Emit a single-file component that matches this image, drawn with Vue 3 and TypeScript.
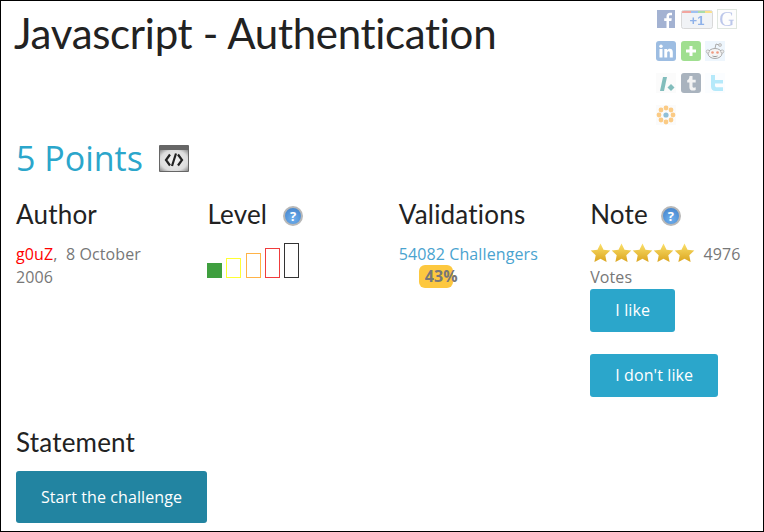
<script setup lang="ts">
const bars = [
  { h: 15, color: "#3f9f3f", fill: true },
  { h: 20, color: "#ffff33", fill: false },
  { h: 25, color: "#ffb347", fill: false },
  { h: 30, color: "#f03c3c", fill: false },
  { h: 35, color: "#333333", fill: false },
];
const stars = [1, 2, 3, 4, 5];
</script>

<template>
  <div class="page">
    <header class="top">
      <h1>Javascript - Authentication</h1>
      <div class="social">
        <div class="soc-row">
          <svg class="fb" width="18" height="18" viewBox="0 0 18 18"><rect width="18" height="18" fill="#a3b2d2" /><path d="M12 18v-7h2.400l.4-2.800H12V6.600c0-.8.3-1.300 1.400-1.300H15V2.800c-.5 0-1.200-.1-2-.1-2 0-3.500 1.200-3.500 3.500v2H7.200V11h2.300v7z" fill="#fff" /></svg>
          <svg class="plus-one" width="32" height="19" viewBox="0 0 32 19"><rect x=".5" y=".5" width="31" height="18" rx="2" fill="#f1f3f6" stroke="#d9d9d9" /><path d="M1 3V2a1 1 0 0 1 1-1h8v2z" fill="#f2a6a0" /><path d="M10 1h7v2h-7z" fill="#9fc0f2" /><path d="M17 1h7v2h-7z" fill="#a9dca9" /><path d="M24 1h6a1 1 0 0 1 1 1v1h-7z" fill="#fbe08c" /><text x="16" y="15" text-anchor="middle" class="plus-text">+1</text></svg>
          <svg class="g-icon" width="20" height="20" viewBox="0 0 20 20"><rect x=".5" y=".5" width="19" height="19" fill="#fdfdfd" stroke="#dfe6df" /><text x="10" y="16.500" text-anchor="middle" class="g-text">G</text></svg>
        </div>
        <div class="soc-row">
          <svg width="20" height="20" viewBox="0 0 20 20"><rect width="20" height="20" rx="3" fill="#9dbde2" /><rect x="3.500" y="8" width="3" height="8.500" fill="#fff" /><circle cx="5" cy="5.300" r="1.700" fill="#fff" /><path d="M8.300 8h2.800v1.300c.5-.9 1.500-1.500 2.700-1.500 2.300 0 3 1.400 3 3.700v5h-3v-4.500c0-1.100-.3-1.800-1.200-1.800-1 0-1.400.8-1.400 1.800v4.500H8.300z" fill="#fff" /></svg>
          <svg class="mid" width="20" height="20" viewBox="0 0 20 20"><rect width="20" height="20" rx="3" fill="#a0df90" /><path d="M8.500 5h3v3.500H15v3h-3.500V15h-3v-3.500H5v-3h3.500z" fill="#fff" /></svg>
          <svg width="20" height="20" viewBox="0 0 20 20"><rect width="20" height="20" fill="#eef6fd" /><ellipse cx="10" cy="12.500" rx="7" ry="5" fill="#f5f5f5" stroke="#aaa" /><circle cx="2.800" cy="10.500" r="1.600" fill="#eee" stroke="#aaa" stroke-width=".7" /><circle cx="17.200" cy="10.500" r="1.600" fill="#eee" stroke="#aaa" stroke-width=".7" /><circle cx="7.500" cy="11.500" r="1.300" fill="#ef9a80" /><circle cx="12.500" cy="11.500" r="1.300" fill="#ef9a80" /><path d="M7.500 15c1.500.8 3.500.8 5 0" fill="none" stroke="#999" /><path d="M10 7.500 11 3l3 1" fill="none" stroke="#aaa" /><circle cx="15" cy="4" r="1.500" fill="#ddd" stroke="#aaa" stroke-width=".6" /></svg>
        </div>
        <div class="soc-row">
          <svg width="20" height="20" viewBox="0 0 20 20"><rect width="20" height="20" fill="#fbfbfb" /><path d="M7 4h4L8 18H4z" fill="#82bdbc" /><path d="M15 11l3.500 3.500L15 18l-3.500-3.500z" fill="#82bdbc" /></svg>
          <svg class="mid" width="20" height="20" viewBox="0 0 20 20"><rect width="20" height="20" rx="3" fill="#a9b3be" /><path d="M8.500 3h3v3.800h3.200v2.700h-3.200v3.800c0 1 .5 1.400 1.300 1.400.7 0 1.300-.2 1.900-.5V17c-.8.400-1.700.6-2.700.6-2.300 0-3.600-1.200-3.600-3.400V9.500H6.200V7.300c1.300-.4 2.100-1.900 2.300-4.300z" fill="#f3f3f3" /></svg>
          <svg width="20" height="20" viewBox="0 0 20 20"><rect width="20" height="20" fill="#fbfdff" /><path d="M6 2h4v5h8v3.500h-8v2c0 1.200.7 1.800 1.800 1.800H18V18h-7.500C7.500 18 6 16.200 6 13.500z" fill="#b5e9fa" /></svg>
        </div>
        <div class="soc-row">
          <svg width="20" height="20" viewBox="0 0 20 20"><rect width="20" height="20" fill="#fbfbfb" /><g fill="#fbcb85"><circle cx="10" cy="3" r="2.400" /><circle cx="10" cy="17" r="2.400" /><circle cx="3" cy="10" r="2.400" /><circle cx="17" cy="10" r="2.400" /><circle cx="5" cy="5" r="2.400" /><circle cx="15" cy="5" r="2.400" /><circle cx="5" cy="15" r="2.400" /><circle cx="15" cy="15" r="2.400" /></g><circle cx="10" cy="10" r="2.600" fill="#8fbfd8" /></svg>
        </div>
      </div>
    </header>

    <div class="points">
      <span>5 Points</span>
      <svg width="30" height="27" viewBox="0 0 30 27">
        <defs>
          <radialGradient id="codeBg" cx=".5" cy=".5" r=".7">
            <stop offset="0" stop-color="#f4f4f4" />
            <stop offset=".7" stop-color="#dcdcdc" />
            <stop offset="1" stop-color="#8a8a8a" />
          </radialGradient>
        </defs>
        <rect width="30" height="27" rx="1" fill="#666" />
        <rect x="1" y="5" width="28" height="21" fill="url(#codeBg)" />
        <path d="M11 9.500 7 15l4 5.500M19 9.500l4 5.500-4 5.500M17 8.500 13 21" fill="none" stroke="#222" stroke-width="2.200" />
      </svg>
    </div>

    <section class="columns">
      <div class="col">
        <h3>Author</h3>
        <p><span class="author">g0uZ</span>,&nbsp; 8 October 2006</p>
      </div>
      <div class="col">
        <h3>Level <span class="help level-help">?</span></h3>
        <div class="bars">
          <span
            v-for="b in bars"
            :key="b.h"
            class="bar"
            :style="{ height: b.h + 'px', borderColor: b.color, background: b.fill ? b.color : 'transparent' }"
          ></span>
        </div>
      </div>
      <div class="col">
        <h3>Validations</h3>
        <p class="link">54082 Challengers</p>
        <div class="badge">43%</div>
      </div>
      <div class="col">
        <h3>Note <span class="help">?</span></h3>
        <p>
          <span class="stars">
            <svg v-for="s in stars" :key="s" width="21" height="19" viewBox="0 0 21 19">
              <defs>
                <linearGradient :id="'st' + s" x1="0" y1="0" x2="0" y2="1">
                  <stop offset="0" stop-color="#fbe06a" />
                  <stop offset="1" stop-color="#dba51f" />
                </linearGradient>
              </defs>
              <path d="M10.500 .5l3 6.200 6.800.9-5 4.700 1.300 6.700-6.100-3.300-6.100 3.300 1.300-6.700-5-4.700 6.800-.9z" :fill="'url(#st' + s + ')'" />
            </svg>
          </span>
          4976 Votes
        </p>
        <a class="btn like">I like</a>
        <a class="btn dislike">I don't like</a>
      </div>
    </section>

    <h3 class="statement">Statement</h3>
    <a class="btn start">Start the challenge</a>
  </div>
</template>

<style scoped>
.page {
  box-sizing: border-box;
  width: 764px;
  height: 532px;
  border: 1px solid #000;
  padding: 0 15px;
  overflow: hidden;
  background: #fff;
  font-family: "Open Sans", "Liberation Sans", sans-serif;
  font-size: 16px;
  letter-spacing: 0.1px;
  color: #777;
}

.top {
  display: flex;
  justify-content: space-between;
  height: 130px;
}

h1 {
  margin: 7px 0 0 -2px;
  font-family: Lato, "Noto Sans", sans-serif;
  font-weight: 400;
  font-size: 42px;
  letter-spacing: -0.3px;
  line-height: 50px;
  color: #222;
}

.social {
  width: 92px;
  padding-top: 8px;
  filter: blur(0.6px);
}

.soc-row {
  display: flex;
  align-items: center;
  gap: 4px;
  height: 20px;
  margin-bottom: 12px;
}

.fb {
  margin: 0 2px 0 1px;
}

.mid {
  margin-left: 1px;
}

.g-icon {
  overflow: visible;
}

.plus-text {
  font: bold 13px "Liberation Sans", sans-serif;
  fill: #8fb2ea;
}

.g-text {
  font: 21px "Liberation Serif", serif;
  fill: #bcc7ea;
}

.points {
  display: flex;
  align-items: center;
  gap: 16px;
  height: 44px;
  margin-top: 5px;
  font-size: 34px;
  letter-spacing: 0;
  color: #2ba6cb;
}

.columns {
  display: grid;
  grid-template-columns: repeat(4, 191.4px);
  margin-top: 19px;
}

.col {
  padding-right: 30px;
}

h3 {
  margin: 0;
  font-family: Lato, "Noto Sans", sans-serif;
  font-weight: 400;
  font-size: 26px;
  letter-spacing: 0.2px;
  line-height: 30px;
  color: #222;
}

p {
  margin: 14px 0 0;
  line-height: 23px;
}

.author {
  color: #f00;
}

.help {
  display: inline-block;
  box-sizing: border-box;
  width: 20px;
  height: 20px;
  margin-top: 7px;
  margin-left: 6px;
  border: 2px solid #b8b8b8;
  border-radius: 50%;
  background: radial-gradient(circle at 50% 70%, #6fb0ee, #3f7fc8);
  color: #fff;
  font: bold 13px/16px "Open Sans", sans-serif;
  letter-spacing: 0;
  text-align: center;
  vertical-align: top;
}

.level-help {
  margin-left: 9px;
}

.bars {
  display: flex;
  align-items: flex-end;
  gap: 4.2px;
  height: 35px;
  margin-top: 14px;
  margin-left: -0.2px;
}

.bar {
  box-sizing: border-box;
  width: 15px;
  border: 1px solid;
}

.link {
  color: #4aa3cf;
}

.badge {
  box-sizing: border-box;
  width: 34px;
  height: 23px;
  margin-top: -1px;
  margin-left: 20px;
  padding-left: 6px;
  border-radius: 6px;
  background: #fdc83f;
  font-weight: 700;
  line-height: 23px;
  white-space: nowrap;
}

.stars {
  display: inline-flex;
  align-items: flex-start;
  height: 19px;
  margin-right: 4px;
  vertical-align: top;
}

.btn {
  display: block;
  box-sizing: border-box;
  border-radius: 3px;
  background: #2ba6cb;
  color: #fff;
  text-align: center;
}

.like {
  width: 85px;
  height: 43px;
  line-height: 43px;
}

.dislike {
  width: 128px;
  height: 43px;
  margin-top: 22px;
  line-height: 43px;
}

.statement {
  margin-top: 30px;
}

.start {
  width: 191px;
  height: 52px;
  margin-top: 14px;
  background: #2284a1;
  line-height: 52px;
}
</style>
